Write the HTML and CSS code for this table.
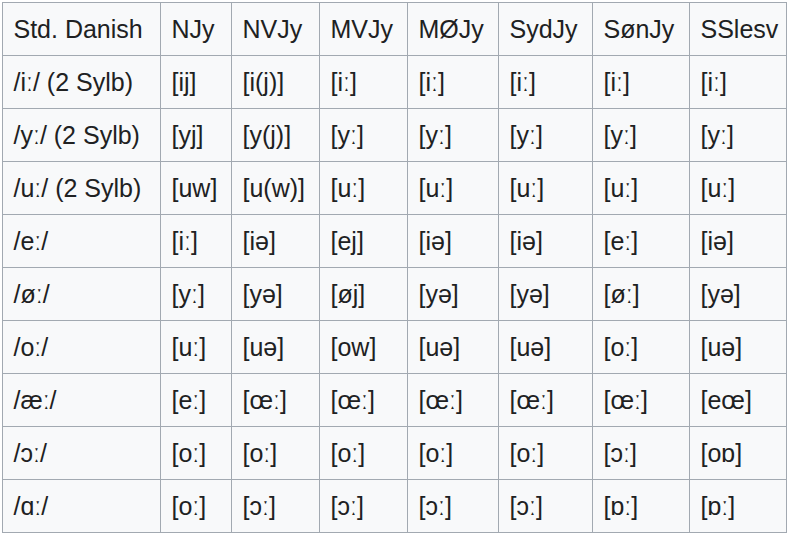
FILE: index.html
```html
<!DOCTYPE html>
<html lang="da">
<head>
<meta charset="utf-8">
<title>Danish vowels</title>
<link rel="stylesheet" href="styles.css">
</head>
<body>
<table class="wikitable">
<colgroup>
<col class="c1"><col class="c2"><col class="c3"><col class="c4"><col class="c5"><col class="c6"><col class="c7"><col class="c8">
</colgroup>
<tbody>
<tr><td>Std. Danish</td><td>NJy</td><td>NVJy</td><td>MVJy</td><td>MØJy</td><td>SydJy</td><td>SønJy</td><td>SSlesv</td></tr>
<tr><td>/iː/ (2 Sylb)</td><td>[ij]</td><td>[i(j)]</td><td>[iː]</td><td>[iː]</td><td>[iː]</td><td>[iː]</td><td>[iː]</td></tr>
<tr><td>/yː/ (2 Sylb)</td><td>[yj]</td><td>[y(j)]</td><td>[yː]</td><td>[yː]</td><td>[yː]</td><td>[yː]</td><td>[yː]</td></tr>
<tr><td>/uː/ (2 Sylb)</td><td>[uw]</td><td>[u(w)]</td><td>[uː]</td><td>[uː]</td><td>[uː]</td><td>[uː]</td><td>[uː]</td></tr>
<tr><td>/eː/</td><td>[iː]</td><td>[iə]</td><td>[ej]</td><td>[iə]</td><td>[iə]</td><td>[eː]</td><td>[iə]</td></tr>
<tr><td>/øː/</td><td>[yː]</td><td>[yə]</td><td>[øj]</td><td>[yə]</td><td>[yə]</td><td>[øː]</td><td>[yə]</td></tr>
<tr><td>/oː/</td><td>[uː]</td><td>[uə]</td><td>[ow]</td><td>[uə]</td><td>[uə]</td><td>[oː]</td><td>[uə]</td></tr>
<tr><td>/æː/</td><td>[eː]</td><td>[œː]</td><td>[œː]</td><td>[œː]</td><td>[œː]</td><td>[œː]</td><td>[eœ]</td></tr>
<tr><td>/ɔː/</td><td>[oː]</td><td>[oː]</td><td>[oː]</td><td>[oː]</td><td>[oː]</td><td>[ɔː]</td><td>[oɒ]</td></tr>
<tr><td>/ɑː/</td><td>[oː]</td><td>[ɔː]</td><td>[ɔː]</td><td>[ɔː]</td><td>[ɔː]</td><td>[ɒː]</td><td>[ɒː]</td></tr>
</tbody>
</table>
</body>
</html>
```
FILE: styles.css
```css
html, body {
  margin: 0;
  padding: 0;
  background: #ffffff;
}
body {
  padding: 2px 0 0 2px;
  font-family: "Liberation Sans", Arial, "DejaVu Sans", sans-serif;
  font-size: 25px;
  color: #202122;
}
.wikitable {
  table-layout: fixed;
  width: 785px;
  border-collapse: separate;
  border-spacing: 0;
  background: #f8f9fa;
  border-top: 1px solid #a2a9b1;
  border-left: 1px solid #a2a9b1;
}
.wikitable td {
  box-sizing: border-box;
  height: 53px;
  padding: 0 8px 0 10.5px;
  border-right: 1px solid #a2a9b1;
  border-bottom: 1px solid #a2a9b1;
  vertical-align: middle;
  white-space: nowrap;
  line-height: 1.6;
  overflow: hidden;
}
.c1 { width: 158px; }
.c2 { width: 71px; }
.c3 { width: 88px; }
.c4 { width: 88px; }
.c5 { width: 91px; }
.c6 { width: 94px; }
.c7 { width: 97px; }
.c8 { width: 97px; }
```
